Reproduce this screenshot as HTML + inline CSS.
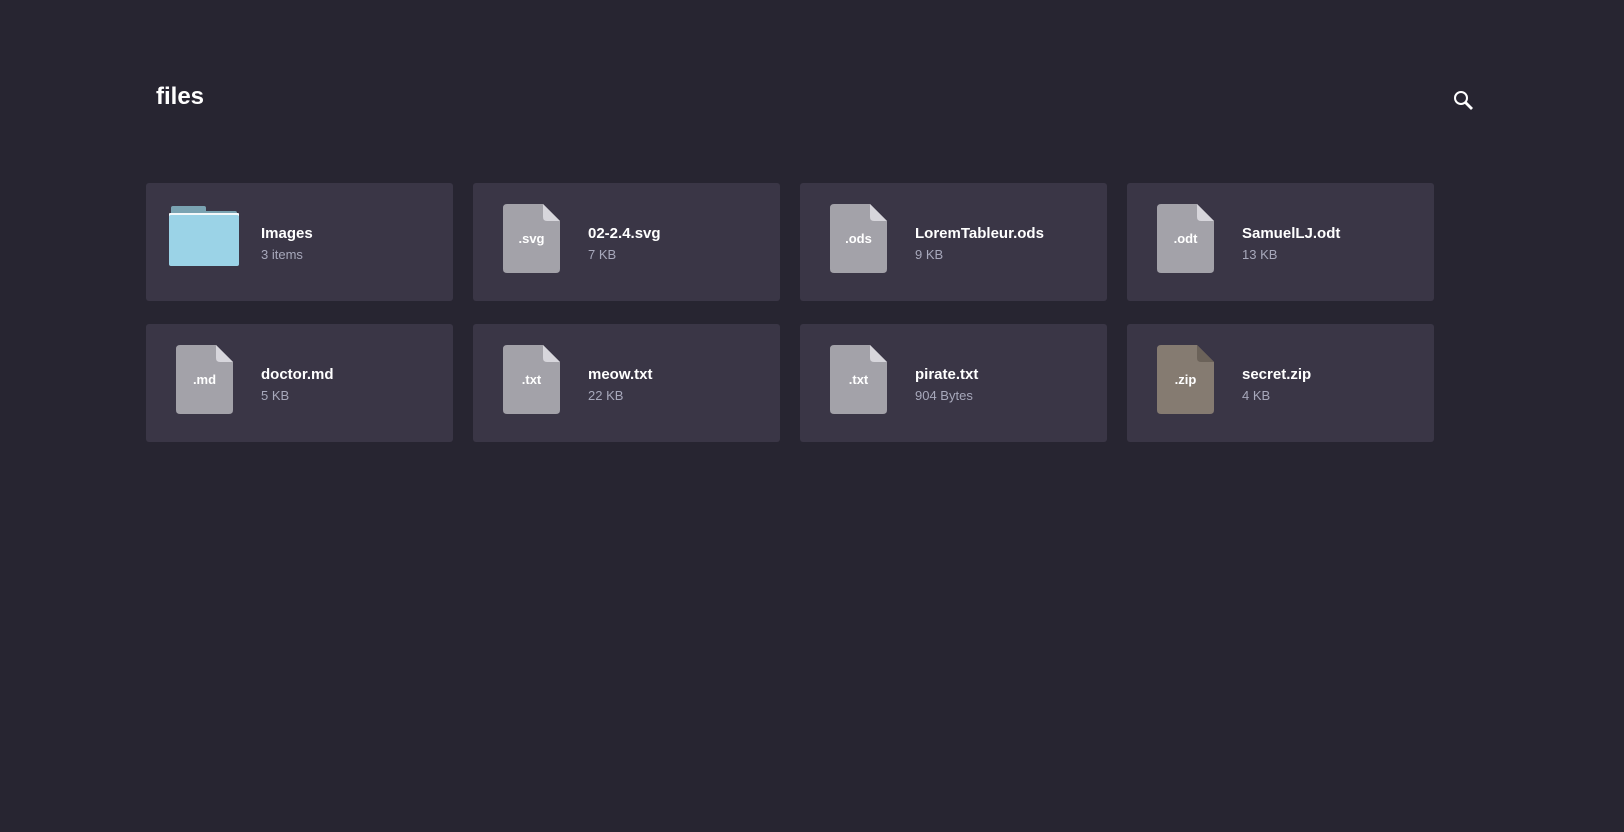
<!DOCTYPE html>
<html><head><meta charset="utf-8"><style>
*{margin:0;padding:0;box-sizing:border-box}
body{width:1624px;height:832px;background:#272531;font-family:"Liberation Sans",sans-serif;position:relative;overflow:hidden}
h1{position:absolute;left:156px;top:83px;font-size:24px;font-weight:bold;color:#fff}
.search{position:absolute;left:1452px;top:89px}
.card{position:absolute;width:307px;height:118px;background:#3a3646;border-radius:3px}
.ic{position:absolute;left:30px;top:21px}
.name{position:absolute;left:115px;top:42px;font-size:15px;font-weight:bold;color:#fff}
.sub{position:absolute;left:115px;top:64px;font-size:13px;color:#a7a8bb}
</style></head><body>
<h1>files</h1>
<svg class="search" width="24" height="24" viewBox="0 0 24 24"><circle cx="9" cy="9" r="6" fill="none" stroke="#fff" stroke-width="2"/><path d="M13.5 13.5 L20 20" stroke="#fff" stroke-width="2.8" stroke-linecap="butt"/></svg>

<div class="card" style="left:146px;top:183px">
<svg style="position:absolute;left:23px;top:23px" width="70" height="62" viewBox="0 0 70 62"><rect x="2" y="0" width="35" height="10" rx="2" fill="#7aa3b2"/><rect x="2" y="5" width="66" height="12" rx="2" fill="#7aa3b2"/><rect x="0" y="7" width="70" height="4" rx="1" fill="#f4f8fa"/><rect x="0" y="9" width="70" height="51" rx="2" fill="#9bd3e7"/></svg>
<div class="name">Images</div><div class="sub">3 items</div></div>

<div class="card" style="left:473px;top:183px">
<svg class="ic" width="57" height="69" viewBox="0 0 57 69"><path d="M4 0H40L57 17V65Q57 69 53 69H4Q0 69 0 65V4Q0 0 4 0Z" fill="#a3a2a9"/><path d="M40 0L57 17H44Q40 17 40 13Z" fill="#d7d6dc"/><text x="28.5" y="39" text-anchor="middle" font-family="Liberation Sans" font-weight="bold" font-size="13" fill="#fff">.svg</text></svg>
<div class="name">02-2.4.svg</div><div class="sub">7 KB</div></div>

<div class="card" style="left:800px;top:183px">
<svg class="ic" width="57" height="69" viewBox="0 0 57 69"><path d="M4 0H40L57 17V65Q57 69 53 69H4Q0 69 0 65V4Q0 0 4 0Z" fill="#a3a2a9"/><path d="M40 0L57 17H44Q40 17 40 13Z" fill="#d7d6dc"/><text x="28.5" y="39" text-anchor="middle" font-family="Liberation Sans" font-weight="bold" font-size="13" fill="#fff">.ods</text></svg>
<div class="name">LoremTableur.ods</div><div class="sub">9 KB</div></div>

<div class="card" style="left:1127px;top:183px">
<svg class="ic" width="57" height="69" viewBox="0 0 57 69"><path d="M4 0H40L57 17V65Q57 69 53 69H4Q0 69 0 65V4Q0 0 4 0Z" fill="#a3a2a9"/><path d="M40 0L57 17H44Q40 17 40 13Z" fill="#d7d6dc"/><text x="28.5" y="39" text-anchor="middle" font-family="Liberation Sans" font-weight="bold" font-size="13" fill="#fff">.odt</text></svg>
<div class="name">SamuelLJ.odt</div><div class="sub">13 KB</div></div>

<div class="card" style="left:146px;top:324px">
<svg class="ic" width="57" height="69" viewBox="0 0 57 69"><path d="M4 0H40L57 17V65Q57 69 53 69H4Q0 69 0 65V4Q0 0 4 0Z" fill="#a3a2a9"/><path d="M40 0L57 17H44Q40 17 40 13Z" fill="#d7d6dc"/><text x="28.5" y="39" text-anchor="middle" font-family="Liberation Sans" font-weight="bold" font-size="13" fill="#fff">.md</text></svg>
<div class="name">doctor.md</div><div class="sub">5 KB</div></div>

<div class="card" style="left:473px;top:324px">
<svg class="ic" width="57" height="69" viewBox="0 0 57 69"><path d="M4 0H40L57 17V65Q57 69 53 69H4Q0 69 0 65V4Q0 0 4 0Z" fill="#a3a2a9"/><path d="M40 0L57 17H44Q40 17 40 13Z" fill="#d7d6dc"/><text x="28.5" y="39" text-anchor="middle" font-family="Liberation Sans" font-weight="bold" font-size="13" fill="#fff">.txt</text></svg>
<div class="name">meow.txt</div><div class="sub">22 KB</div></div>

<div class="card" style="left:800px;top:324px">
<svg class="ic" width="57" height="69" viewBox="0 0 57 69"><path d="M4 0H40L57 17V65Q57 69 53 69H4Q0 69 0 65V4Q0 0 4 0Z" fill="#a3a2a9"/><path d="M40 0L57 17H44Q40 17 40 13Z" fill="#d7d6dc"/><text x="28.5" y="39" text-anchor="middle" font-family="Liberation Sans" font-weight="bold" font-size="13" fill="#fff">.txt</text></svg>
<div class="name">pirate.txt</div><div class="sub">904 Bytes</div></div>

<div class="card" style="left:1127px;top:324px">
<svg class="ic" width="57" height="69" viewBox="0 0 57 69"><path d="M4 0H40L57 17V65Q57 69 53 69H4Q0 69 0 65V4Q0 0 4 0Z" fill="#857b71"/><path d="M40 0L57 17H44Q40 17 40 13Z" fill="#6b6259"/><text x="28.5" y="39" text-anchor="middle" font-family="Liberation Sans" font-weight="bold" font-size="13" fill="#fff">.zip</text></svg>
<div class="name">secret.zip</div><div class="sub">4 KB</div></div>
</body></html>
